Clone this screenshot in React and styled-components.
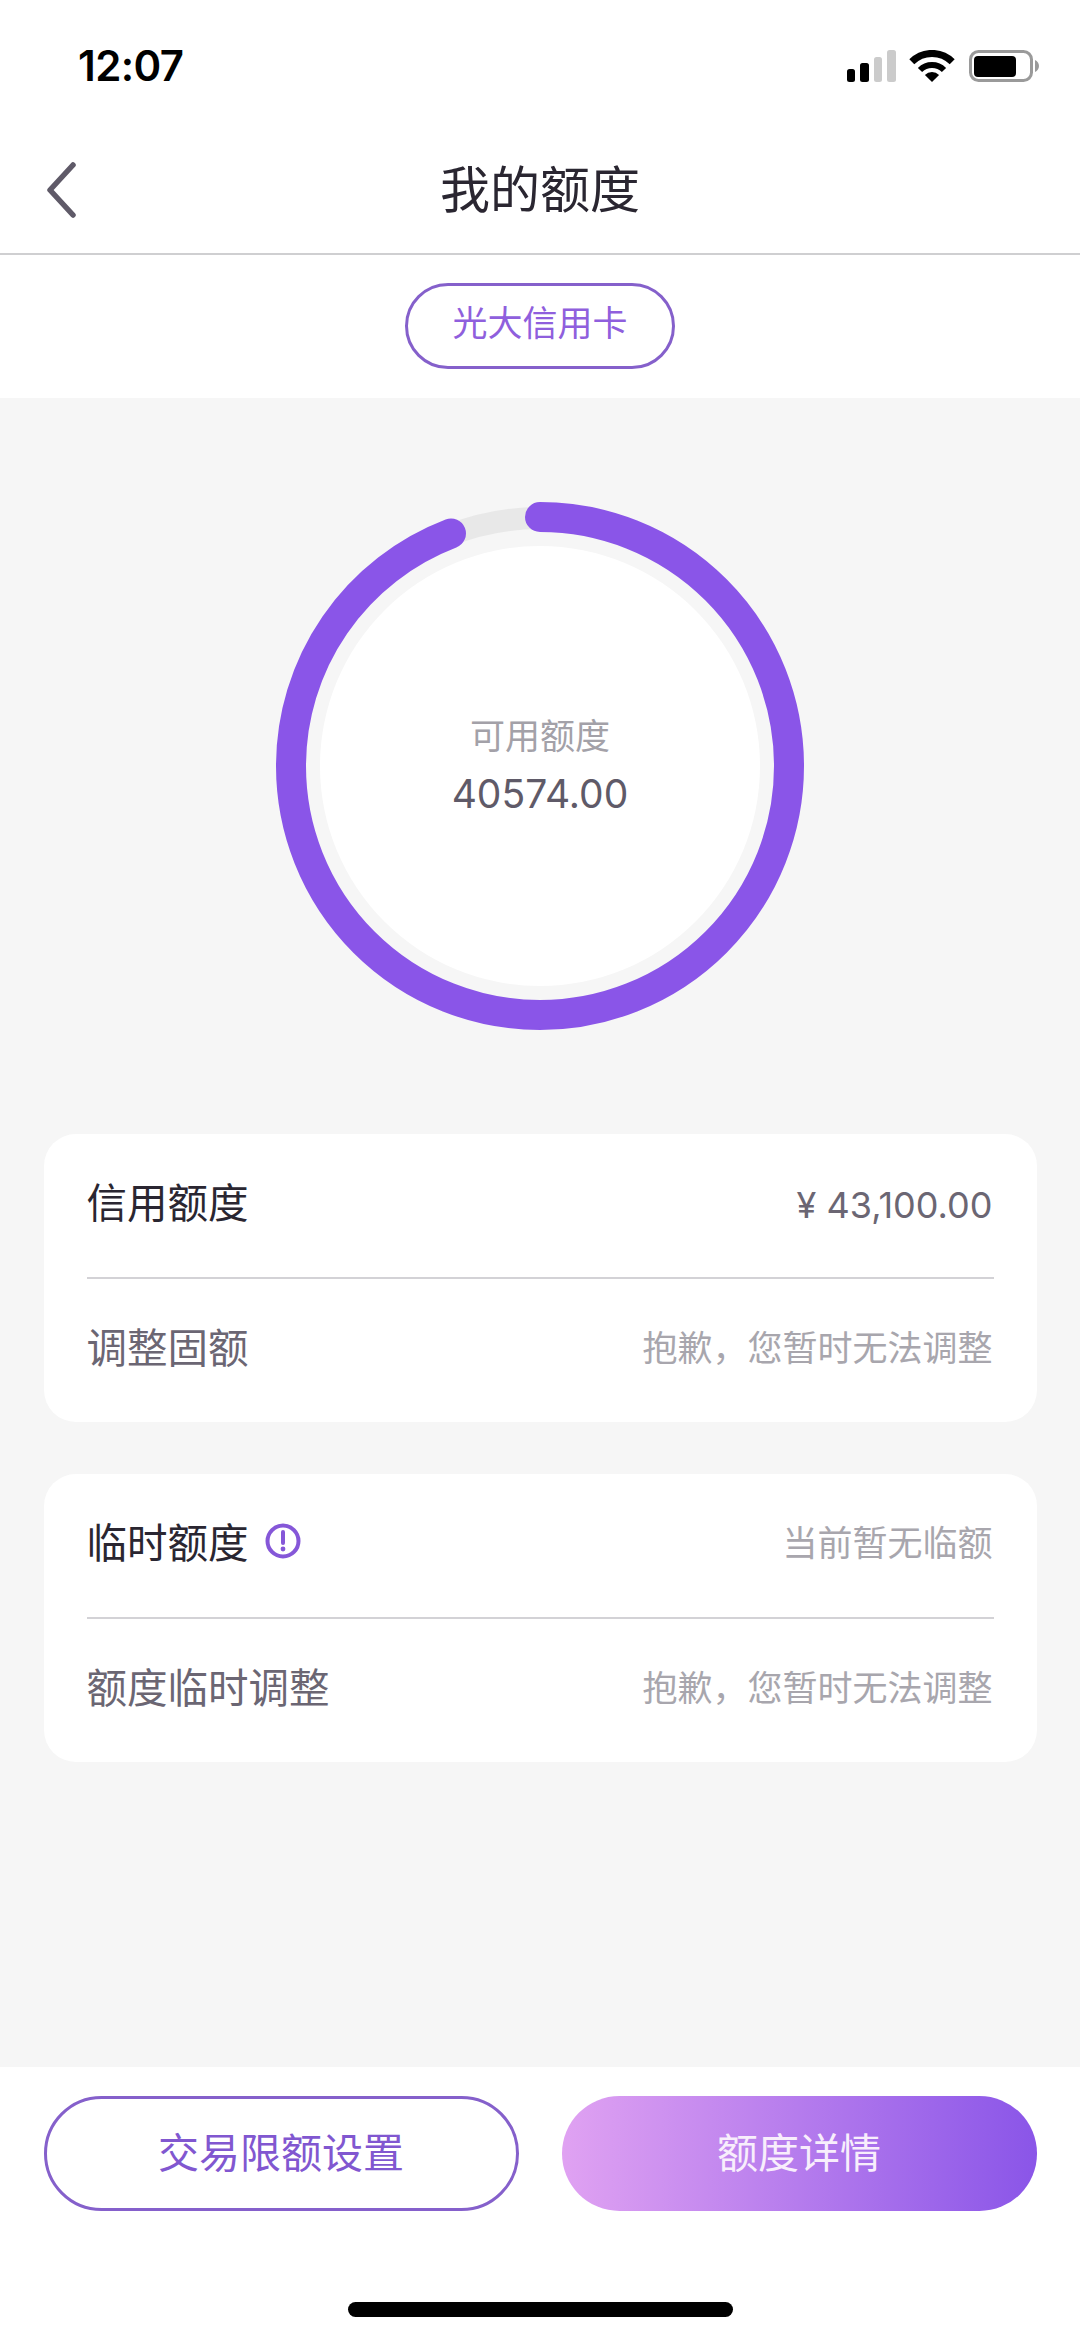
import React from "react";
import styled, { createGlobalStyle } from "styled-components";

const GlobalStyle = createGlobalStyle`
  html, body {
    margin: 0;
    padding: 0;
    background: #ffffff;
  }
  * {
    box-sizing: border-box;
  }
`;

const FONT = `Inter, "Noto Sans CJK SC", sans-serif`;
const PURPLE = "#8a55e8";

const Page = styled.div`
  width: 1080px;
  height: 2338px;
  display: flex;
  flex-direction: column;
  background: #ffffff;
  font-family: ${FONT};
  overflow: hidden;
`;

const StatusBar = styled.div`
  height: 96px;
  display: flex;
  align-items: flex-start;
  justify-content: space-between;
  padding: 41px 41px 0 78px;
`;

const Clock = styled.div`
  font-size: 42px;
  line-height: 50px;
  font-weight: 600;
  color: #000000;
  letter-spacing: -0.6px;
`;

const StatusIcons = styled.svg`
  width: 192px;
  height: 32px;
  margin-top: 9px;
`;

const NavBar = styled.div`
  height: 159px;
  display: grid;
  grid-template-columns: 1fr auto 1fr;
  align-items: center;
  padding: 30px 44px 0;
  border-bottom: 2px solid #cfcfd1;
`;

const BackIcon = styled.svg`
  width: 34px;
  height: 56px;
`;

const Title = styled.div`
  font-size: 50px;
  line-height: 60px;
  color: #2a2631;
`;

const TabStrip = styled.div`
  height: 143px;
  display: flex;
  justify-content: center;
  padding-top: 28px;
`;

const CardPill = styled.div`
  width: 270px;
  height: 86px;
  padding-bottom: 12px;
  border: 3px solid #8560cb;
  border-radius: 43px;
  display: flex;
  align-items: center;
  justify-content: center;
  font-size: 35px;
  color: #8f5fdd;
`;

const Main = styled.div`
  flex: 1;
  background: #f6f6f6;
  display: flex;
  flex-direction: column;
  align-items: center;
  padding-top: 104px;
`;

const Gauge = styled.div`
  width: 528px;
  height: 528px;
  display: grid;
  place-items: center;
  margin-bottom: 104px;
  > * {
    grid-area: 1 / 1;
  }
`;

const GaugeText = styled.div`
  display: flex;
  flex-direction: column;
  align-items: center;
`;

const GaugeLabel = styled.div`
  font-size: 35px;
  line-height: 44px;
  color: #a3a1a8;
`;

const GaugeValue = styled.div`
  font-size: 39px;
  line-height: 48px;
  margin-top: 12px;
  color: #5f5a68;
`;

const Card = styled.div`
  width: 993px;
  padding: 0 43px;
  background: #ffffff;
  border-radius: 32px;
  margin-bottom: 52px;
`;

const Row = styled.div`
  height: ${(p) => (p.$divider ? "145px" : "143px")};
  display: flex;
  align-items: center;
  justify-content: space-between;
  border-bottom: ${(p) => (p.$divider ? "2px solid #d3d2d6" : "none")};
`;

const RowTitle = styled.div`
  display: flex;
  align-items: center;
  gap: 16px;
  padding-bottom: 10px;
  font-size: 40.5px;
  color: ${(p) => (p.$muted ? "#6b6673" : "#2a2631")};
`;

const RowValue = styled.div`
  padding: 0 1px ${(p) => (p.$amount ? "2px" : "10px")} 0;
  font-size: ${(p) => (p.$amount ? "36px" : "35px")};
  color: ${(p) => (p.$amount ? "#6b6673" : "#a8a6ad")};
`;

const Footer = styled.div`
  height: 271px;
  display: flex;
  flex-direction: column;
  align-items: center;
  padding-top: 29px;
`;

const ButtonRow = styled.div`
  width: 993px;
  display: flex;
  justify-content: space-between;
`;

const Button = styled.div`
  width: 475px;
  height: 115px;
  padding-bottom: 8px;
  border-radius: 58px;
  display: flex;
  align-items: center;
  justify-content: center;
  font-size: 41px;
  color: ${(p) => (p.$primary ? "#f8eefc" : "#8157d0")};
  border: ${(p) => (p.$primary ? "none" : "3px solid #8560cb")};
  background: ${(p) =>
    p.$primary ? `linear-gradient(90deg, #e0a2f2 0%, ${PURPLE} 100%)` : "#ffffff"};
`;

const HomeBar = styled.div`
  width: 385px;
  height: 15px;
  margin-top: 91px;
  border-radius: 8px;
  background: #000000;
`;

const AVAILABLE = 40574;
const LIMIT = 43100;
const RING_R = 249;

const Ring = () => {
  const length = 2 * Math.PI * RING_R;
  const used = (AVAILABLE / LIMIT) * length;
  return (
    <svg width="528" height="528" viewBox="0 0 528 528">
      <circle cx="264" cy="264" r="220" fill="#ffffff" />
      <circle cx="264" cy="264" r="248" fill="none" stroke="#e8e8e8" strokeWidth="22" />
      <circle
        cx="264"
        cy="264"
        r={RING_R}
        fill="none"
        stroke={PURPLE}
        strokeWidth="30"
        strokeLinecap="round"
        strokeDasharray={`${used} ${length}`}
        transform="rotate(-90 264 264)"
      />
    </svg>
  );
};

const InfoIcon = () => (
  <svg width="36" height="36" viewBox="0 0 36 36">
    <circle cx="18" cy="18" r="15.5" fill="none" stroke="#8557d8" strokeWidth="4" />
    <path d="M18 9v11" stroke="#8557d8" strokeWidth="4" strokeLinecap="round" />
    <circle cx="18" cy="26" r="2.4" fill="#8557d8" />
  </svg>
);

export default function App() {
  return (
    <Page>
      <GlobalStyle />
      <StatusBar>
        <Clock>12:07</Clock>
        <StatusIcons viewBox="0 0 192 32">
          <rect x="0" y="19" width="8" height="13" rx="2.5" fill="#000" />
          <rect x="13" y="13" width="9" height="19" rx="2.5" fill="#000" />
          <rect x="27" y="7" width="8" height="25" rx="2.5" fill="#cbcbcb" />
          <rect x="40" y="0" width="9" height="32" rx="2.5" fill="#cbcbcb" />
          <path d="M64.8 11.8A28.5 28.5 0 0 1 105.2 11.8" fill="none" stroke="#000" strokeWidth="7" />
          <path d="M73 20A17 17 0 0 1 97 20" fill="none" stroke="#000" strokeWidth="6" />
          <path d="M85 32L77.9 24.9A10 10 0 0 1 92.1 24.9Z" fill="#000" />
          <rect x="123.5" y="1.5" width="61" height="29" rx="8" fill="none" stroke="#9a9a9a" strokeWidth="3" />
          <rect x="127" y="6" width="42" height="21" rx="4" fill="#000" />
          <path d="M188 10c2.500 1 4 3.500 4 6s-1.500 5-4 6z" fill="#9a9a9a" />
        </StatusIcons>
      </StatusBar>

      <NavBar>
        <BackIcon viewBox="0 0 34 56">
          <path d="M29 3L6 28l23 25" fill="none" stroke="#5f5a68" strokeWidth="5.500" strokeLinecap="round" strokeLinejoin="round" />
        </BackIcon>
        <Title>我的额度</Title>
      </NavBar>

      <TabStrip>
        <CardPill>光大信用卡</CardPill>
      </TabStrip>

      <Main>
        <Gauge>
          <Ring />
          <GaugeText>
            <GaugeLabel>可用额度</GaugeLabel>
            <GaugeValue>40574.00</GaugeValue>
          </GaugeText>
        </Gauge>

        <Card>
          <Row $divider>
            <RowTitle>信用额度</RowTitle>
            <RowValue $amount>¥ 43,100.00</RowValue>
          </Row>
          <Row>
            <RowTitle $muted>调整固额</RowTitle>
            <RowValue>抱歉，您暂时无法调整</RowValue>
          </Row>
        </Card>

        <Card>
          <Row $divider>
            <RowTitle>
              临时额度
              <InfoIcon />
            </RowTitle>
            <RowValue>当前暂无临额</RowValue>
          </Row>
          <Row>
            <RowTitle $muted>额度临时调整</RowTitle>
            <RowValue>抱歉，您暂时无法调整</RowValue>
          </Row>
        </Card>
      </Main>

      <Footer>
        <ButtonRow>
          <Button>交易限额设置</Button>
          <Button $primary>额度详情</Button>
        </ButtonRow>
        <HomeBar />
      </Footer>
    </Page>
  );
}
